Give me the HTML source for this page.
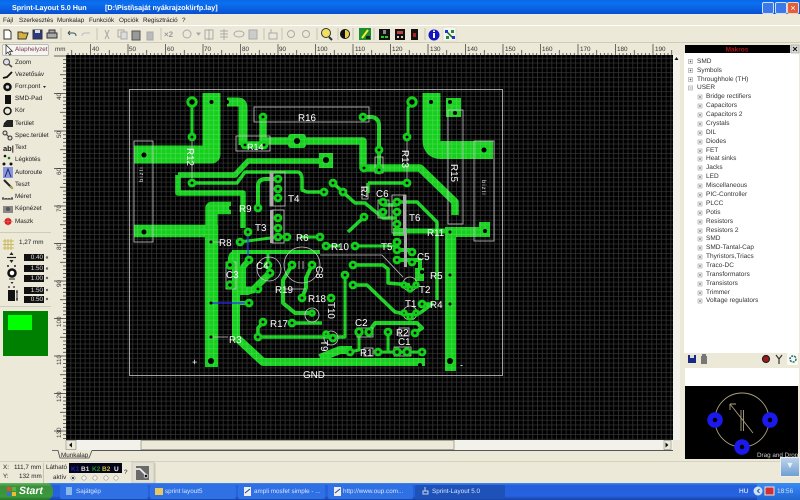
<!DOCTYPE html>
<html><head><meta charset="utf-8"><style>
html,body{margin:0;padding:0;width:800px;height:500px;overflow:hidden;background:#ece9d8;font-family:"Liberation Sans",sans-serif;color:#222;text-rendering:geometricPrecision}
body{filter:blur(.3px)}
.a{position:absolute;white-space:nowrap}
.m{top:17px;font-size:6.3px;line-height:8px}
.p{left:15px;font-size:6.3px;line-height:8px}
.t{left:697px;font-size:6.5px;line-height:8px;color:#333}
.t0{left:697px}.t1{left:706px}
.f{left:24px;width:20px;height:7px;background:#111;color:#ddd;font-size:6.3px;line-height:7px;text-align:right;padding-right:1px;box-sizing:border-box}
.tb{top:485px;height:14px;font-size:6.3px;line-height:14px;color:#d6e4fb;background:#2f70e4;border-radius:2px;box-sizing:border-box;padding-left:22px}
.s{font-size:6.3px;line-height:8px}
svg{position:absolute;left:0;top:0}
.ln{font:9.8px "Liberation Sans",sans-serif;fill:#fff}
</style></head><body>

<!-- title bar -->
<div class="a" style="left:0;top:0;width:800px;height:14px;background:linear-gradient(#0a68e8,#0a70f0 25%,#0a5fe0 65%,#0650d0)"></div>
<div class="a" style="left:12px;top:3px;font-size:7.2px;font-weight:bold;color:#fff;line-height:9px">Sprint-Layout 5.0 Hun</div>
<div class="a" style="left:105px;top:3px;font-size:7.2px;font-weight:bold;color:#fff;line-height:9px">[D:\Pisti\saját nyákrajzok\irfp.lay]</div>
<div class="a" style="left:762px;top:2px;width:10px;height:10px;background:#3c78e8;border:1px solid #cfe0fa;border-radius:2px"></div>
<div class="a" style="left:775px;top:2px;width:10px;height:10px;background:#3c78e8;border:1px solid #cfe0fa;border-radius:2px"></div>
<div class="a" style="left:787px;top:2px;width:10px;height:10px;background:#e0603c;border:1px solid #f5d0c0;border-radius:2px;color:#fff;font-size:9px;line-height:10px;text-align:center">×</div>

<!-- menu -->
<div class="a m" style="left:3px">Fájl</div>
<div class="a m" style="left:19px">Szerkesztés</div>
<div class="a m" style="left:57px">Munkalap</div>
<div class="a m" style="left:89px">Funkciók</div>
<div class="a m" style="left:119px">Opciók</div>
<div class="a m" style="left:143px">Regisztráció</div>
<div class="a m" style="left:182px">?</div>
<div class="a" style="left:0;top:25px;width:800px;height:1px;background:#fff"></div>
<div class="a" style="left:0;top:42px;width:800px;height:1px;background:#cfccb8"></div>

<!-- left palette text -->
<div class="a" style="left:2px;top:44px;width:47px;height:12px;background:#f6f5ee;border:1px solid #bbb;border-radius:2px;box-sizing:border-box"></div>
<div class="a p" style="top:46px;color:#7a3a5a">Alaphelyzet</div>
<div class="a p" style="top:59px">Zoom</div>
<div class="a p" style="top:71px">Vezetősáv</div>
<div class="a p" style="top:83px">Forr.pont</div>
<div class="a p" style="top:95px">SMD-Pad</div>
<div class="a p" style="top:107px">Kör</div>
<div class="a p" style="top:120px">Terület</div>
<div class="a p" style="top:132px">Spec.terület</div>
<div class="a p" style="top:144px">Text</div>
<div class="a p" style="top:156px">Légkötés</div>
<div class="a p" style="top:169px">Autoroute</div>
<div class="a p" style="top:181px">Teszt</div>
<div class="a p" style="top:193px">Méret</div>
<div class="a p" style="top:205px">Képnézet</div>
<div class="a p" style="top:218px">Maszk</div>
<div class="a s" style="left:19px;top:239px">1,27 mm</div>
<div class="a f" style="top:254px">0.40</div>
<div class="a f" style="top:265px">1.50</div>
<div class="a f" style="top:275px">1.00</div>
<div class="a f" style="top:287px">1.50</div>
<div class="a f" style="top:296px">0.50</div>
<div class="a" style="left:3px;top:311px;width:45px;height:45px;background:#008000"></div>
<div class="a" style="left:8px;top:315px;width:24px;height:15px;background:#0f0"></div>

<!-- main svg -->
<svg width="800" height="500" viewBox="0 0 800 500">
<defs>
<pattern id="g" patternUnits="userSpaceOnUse" x="66.5" y="54" width="4.7625" height="4.7625">
<path d="M4.3 0V4.7625M0 4.3H4.7625" stroke="#fff" stroke-opacity=".2" stroke-width=".8" fill="none"/>
</pattern>
<pattern id="rt" patternUnits="userSpaceOnUse" x="90" y="44" width="37.5" height="11">
<path d="M.5 0V11M19.25 6V11M4.25 9V11M8 9V11M11.75 9V11M15.5 9V11M23 9V11M26.75 9V11M30.5 9V11M34.25 9V11" stroke="#333" stroke-width=".7" fill="none"/>
</pattern>
<pattern id="rl" patternUnits="userSpaceOnUse" x="54" y="93" width="12" height="37.5">
<path d="M0 .5H12M6 19.25H12M9 4.25H12M9 8H12M9 11.75H12M9 15.5H12M9 23H12M9 26.75H12M9 30.5H12M9 34.25H12" stroke="#333" stroke-width=".7" fill="none"/>
</pattern>
</defs>

<!-- rulers -->
<rect x="66" y="44" width="607" height="11" fill="url(#rt)"/>
<rect x="54" y="55" width="12" height="385" fill="url(#rl)"/>
<g font-family="Liberation Sans,sans-serif" font-size="6.3" fill="#333">
<text x="55" y="51">mm</text>
<text x="92" y="51">40</text><text x="129" y="51">50</text><text x="167" y="51">60</text><text x="204" y="51">70</text><text x="242" y="51">80</text><text x="279" y="51">90</text><text x="317" y="51">100</text><text x="355" y="51">110</text><text x="392" y="51">120</text><text x="430" y="51">130</text><text x="467" y="51">140</text><text x="505" y="51">150</text><text x="542" y="51">160</text><text x="580" y="51">170</text><text x="617" y="51">180</text><text x="655" y="51">190</text>
<text transform="translate(61,100) rotate(-90)">40</text><text transform="translate(61,138) rotate(-90)">50</text><text transform="translate(61,175) rotate(-90)">60</text><text transform="translate(61,212) rotate(-90)">70</text><text transform="translate(61,250) rotate(-90)">80</text><text transform="translate(61,287) rotate(-90)">90</text><text transform="translate(61,327) rotate(-90)">100</text><text transform="translate(61,365) rotate(-90)">110</text><text transform="translate(61,402) rotate(-90)">120</text><text transform="translate(61,438) rotate(-90)">130</text>
</g>

<!-- board -->
<rect x="66" y="55" width="607" height="385" fill="#000"/>
<g fill="none" stroke="#14cf1c" stroke-linejoin="round" stroke-linecap="butt">
<!-- big pours -->
<path d="M134 154.5H211.5V93" stroke-width="18"/>
<path d="M431.5 93V140Q431.5 150 441 150H493" stroke-width="18"/>
<path d="M231 208H211.5V231H134" stroke-width="12.5"/>
<path d="M211.5 225V367" stroke-width="13"/>
<path d="M450.5 227V371" stroke-width="11"/>
<path d="M445 232H490" stroke-width="10"/>
<rect x="479" y="222" width="11" height="15" fill="#14cf1c" stroke="none"/>
<rect x="446" y="98" width="15" height="19" fill="#14cf1c" stroke="none"/>
<rect x="319" y="153" width="14" height="15" fill="#14cf1c" stroke="none"/>
<rect x="288" y="134" width="18" height="14" rx="3" fill="#14cf1c" stroke="none"/>
<rect x="393" y="228" width="14" height="8" fill="#14cf1c" stroke="none"/>
<!-- wide traces -->
<path d="M227 102H238Q243 102 243 108V145" stroke-width="9"/>
<path d="M263 117V145H245M264 141H363V168H420L455 202V215" stroke-width="7.5"/>
<path d="M178 175H235L248 161H326M178 175V193H243V228" stroke-width="5.5"/>
<path d="M192 183H237L245 172H297Q302 172 302 180V190L307 192H322" stroke-width="3.5"/>
<path d="M192 102V137M412 102L408 108V137" stroke-width="3"/>
<path d="M363 117H372Q379 118 379 126V170" stroke-width="4"/>
<path d="M258 208V186Q258 179 266 179H278" stroke-width="4"/>
<path d="M240 242L278 237H287M320 237H300" stroke-width="3"/>
<path d="M368 183H407M368 183V193" stroke-width="3.5"/>
<path d="M333 183L355 203H365L383 218H397M383 205H397M364 217L348 232" stroke-width="3.5"/>
<path d="M397 202H417L437 222V300" stroke-width="3.5"/>
<path d="M400 231H450" stroke-width="5"/>
<path d="M230 265V258Q231 252 238 252H320" stroke-width="4"/>
<path d="M236 250V337L263 362H425" stroke-width="8"/>
<path d="M232 290H253L270 273" stroke-width="7"/>
<path d="M249 260L243 267V290" stroke-width="6"/>
<path d="M236 293H248L258 289M236 303H249" stroke-width="4"/>
<path d="M268 265V253" stroke-width="3"/>
<path d="M292 265L283 280V303L295 313H310" stroke-width="4"/>
<path d="M312 265L306 278V288L302 298" stroke-width="4"/>
<path d="M263 322L258 328V337H345M292 323H322" stroke-width="3.5"/>
<path d="M326 246H340M355 246H397" stroke-width="3"/>
<path d="M397 260H420V272M400 250H412" stroke-width="4"/>
<rect x="415" y="268" width="9" height="13" fill="#14cf1c" stroke="none"/>
<path d="M353 265H383L388 269V283L410 285" stroke-width="3.5"/>
<path d="M353 285H367L395 312L410 315L420 313L432 304H422" stroke-width="3.5"/>
<path d="M345 275V337H333" stroke-width="3"/>
<path d="M369 332L375 323H417L422 328L415 333" stroke-width="4"/>
<path d="M359 332V350L350 352M378 352H422M388 332V352" stroke-width="3"/>
<path d="M320 358L340 350H352" stroke-width="8"/>
</g>
<!-- grid -->
<rect x="66" y="55" width="607" height="385" fill="url(#g)"/>
<!-- outline / silk -->
<g fill="none" stroke="#c8c8c8" stroke-width=".8">
<rect x="129.5" y="89.5" width="373" height="286"/>
<rect x="134" y="141" width="19" height="101"/>
<rect x="474" y="141" width="20" height="100"/>
<rect x="448" y="110" width="15" height="114"/>
<rect x="254" y="107" width="115" height="15"/>
<rect x="236" y="136" width="34" height="15"/>
<rect x="375" y="157" width="8" height="16"/>
<rect x="226" y="262" width="10" height="27"/>
<rect x="270" y="172" width="15" height="34"/>
<rect x="272" y="210" width="12" height="33"/>
<rect x="392" y="195" width="14" height="38"/>
<rect x="378" y="200" width="11" height="18"/>
<rect x="357" y="328" width="16" height="9"/>
<rect x="394" y="347" width="17" height="9"/>
<rect x="364" y="348" width="9" height="8"/>
<rect x="399" y="328" width="10" height="8"/>
<rect x="362" y="187" width="6" height="12"/>
<path d="M407 137V185M192 137V183M320 255H382L403 277M211 242H220M211 337H228M283 289H306"/>
<circle cx="269" cy="269" r="12"/>
<circle cx="302" cy="265" r="18"/>
<path d="M299 261V269M303 261V269"/>
<circle cx="410" cy="284" r="7"/>
<circle cx="410" cy="313" r="7"/>
<circle cx="331" cy="338" r="7"/>
<circle cx="312" cy="315" r="7"/>
</g>
<!-- silver bar -->
<rect x="270" y="172" width="3.5" height="34" fill="#aaa"/>
<rect x="270" y="210" width="3.5" height="33" fill="#aaa"/>
<rect x="404" y="233" width="3" height="34" fill="#aaa"/>
<rect x="403" y="195" width="3" height="38" fill="#aaa"/>
<path d="M248 230V260M211 303H248" stroke="#2a2aff" stroke-width="1.2" fill="none"/>
<!-- pads -->
<g fill="#000" stroke="#14cf1c" stroke-width="3">
<circle cx="192" cy="102" r="4.2"/><circle cx="192" cy="137" r="2.9"/><circle cx="192" cy="183" r="2.9"/>
<circle cx="412" cy="102" r="4.2"/><circle cx="407" cy="137" r="2.9"/><circle cx="407" cy="183" r="2.9"/>
<circle cx="263" cy="117" r="2.9"/><circle cx="363" cy="117" r="2.9"/>
<circle cx="245" cy="145" r="2.9"/><circle cx="264" cy="145" r="2.9"/>
<circle cx="379" cy="150" r="2.9"/><circle cx="379" cy="170" r="2.9"/><circle cx="364" cy="168" r="2.9"/>
<circle cx="278" cy="179" r="2.9"/><circle cx="278" cy="189" r="2.9"/><circle cx="278" cy="198" r="2.9"/><circle cx="258" cy="208" r="2.9"/>
<circle cx="248" cy="232" r="2.9"/><circle cx="278" cy="218" r="2.9"/><circle cx="278" cy="228" r="2.9"/><circle cx="278" cy="237" r="2.9"/>
<circle cx="240" cy="242" r="2.9"/><circle cx="287" cy="237" r="2.9"/><circle cx="320" cy="237" r="2.9"/>
<circle cx="333" cy="183" r="2.9"/><circle cx="343" cy="192" r="2.9"/><circle cx="324" cy="192" r="2.9"/><circle cx="364" cy="217" r="2.9"/>
<circle cx="383" cy="202" r="2.9"/><circle cx="383" cy="212" r="2.9"/><circle cx="397" cy="202" r="2.9"/><circle cx="397" cy="212" r="2.9"/><circle cx="397" cy="224" r="2.9"/>
<circle cx="326" cy="246" r="2.9"/><circle cx="355" cy="246" r="2.9"/><circle cx="397" cy="242" r="2.9"/><circle cx="397" cy="250" r="2.9"/><circle cx="397" cy="260" r="2.9"/>
<circle cx="412" cy="252" r="2.9"/><circle cx="412" cy="262" r="2.9"/><circle cx="353" cy="265" r="2.9"/><circle cx="353" cy="285" r="2.9"/><circle cx="345" cy="275" r="2.9"/>
<circle cx="404" cy="285" r="2.3"/><circle cx="410" cy="289" r="2.3"/><circle cx="416" cy="285" r="2.3"/>
<circle cx="404" cy="313" r="2.3"/><circle cx="410" cy="317" r="2.3"/><circle cx="416" cy="313" r="2.3"/><circle cx="422" cy="304" r="2.9"/>
<circle cx="359" cy="332" r="3.2"/><circle cx="369" cy="332" r="3.2"/><circle cx="388" cy="332" r="2.9"/><circle cx="415" cy="333" r="2.9"/>
<circle cx="350" cy="352" r="2.9"/><circle cx="378" cy="352" r="2.9"/><circle cx="397" cy="352" r="3.2"/><circle cx="407" cy="352" r="3.2"/><circle cx="422" cy="352" r="2.9"/>
<circle cx="333" cy="338" r="2.9"/><circle cx="326" cy="334" r="2.3"/><circle cx="331" cy="298" r="2.9"/>
<circle cx="230" cy="265" r="3.2"/><circle cx="230" cy="285" r="3.2"/><circle cx="249" cy="260" r="2.9"/><circle cx="268" cy="265" r="2.9"/><circle cx="270" cy="273" r="2.9"/>
<circle cx="292" cy="265" r="2.9"/><circle cx="312" cy="265" r="2.9"/><circle cx="258" cy="289" r="2.9"/><circle cx="302" cy="298" r="2.9"/><circle cx="249" cy="303" r="2.9"/>
<circle cx="263" cy="322" r="2.9"/><circle cx="258" cy="337" r="2.9"/><circle cx="292" cy="323" r="2.9"/><circle cx="312" cy="313" r="2.3"/>
</g>
<!-- holes in pours -->
<g fill="#000">
<circle cx="211.5" cy="102" r="2"/><circle cx="144" cy="155" r="2.5"/><circle cx="227" cy="102" r="2"/><circle cx="297" cy="141" r="3"/>
<circle cx="326" cy="160" r="3"/><circle cx="431" cy="102" r="2"/><circle cx="450" cy="102" r="2"/><circle cx="455" cy="113" r="2"/><circle cx="484" cy="150" r="2.5"/>
<circle cx="231" cy="208" r="2"/><circle cx="144" cy="232" r="2.5"/><circle cx="211" cy="242" r="1.5"/><circle cx="211" cy="303" r="1.5"/><circle cx="211" cy="337" r="1.5"/><circle cx="211" cy="361" r="3"/>
<circle cx="450" cy="361" r="3"/><circle cx="450" cy="232" r="1.5"/><circle cx="450" cy="275" r="1.5"/><circle cx="450" cy="304" r="1.5"/><circle cx="485" cy="231" r="2"/>
<circle cx="420" cy="365" r="2"/><circle cx="422" cy="272" r="2"/>
</g>
<!-- labels -->
<g>
<text class="ln" x="298" y="121">R16</text>
<text class="ln" x="247" y="150" style="font-size:9px">R14</text>
<text class="ln" transform="translate(187,148) rotate(90)">R12</text>
<text class="ln" transform="translate(402,150) rotate(90)">R13</text>
<text class="ln" transform="translate(451,164) rotate(90)">R15</text>
<text class="ln" transform="translate(361,186) rotate(90)" style="font-size:9px">R7</text>
<text class="ln" x="239" y="212">R9</text>
<text class="ln" x="219" y="246">R8</text>
<text class="ln" x="296" y="241">R6</text>
<text class="ln" x="331" y="250">R10</text>
<text class="ln" x="427" y="236">R11</text>
<text class="ln" x="430" y="279">R5</text>
<text class="ln" x="430" y="308">R4</text>
<text class="ln" x="275" y="293">R19</text>
<text class="ln" x="308" y="302">R18</text>
<text class="ln" x="270" y="327">R17</text>
<text class="ln" x="229" y="343">R3</text>
<text class="ln" x="396" y="336">R2</text>
<text class="ln" x="360" y="356">R1</text>
<text class="ln" x="376" y="197">C6</text>
<text class="ln" x="417" y="260">C5</text>
<text class="ln" x="256" y="269">C4</text>
<text class="ln" x="226" y="278">C3</text>
<text class="ln" x="355" y="326">C2</text>
<text class="ln" x="398" y="345">C1</text>
<text class="ln" transform="translate(316,266) rotate(90)">C8</text>
<text class="ln" x="288" y="202">T4</text>
<text class="ln" x="255" y="231">T3</text>
<text class="ln" x="409" y="221">T6</text>
<text class="ln" x="381" y="250">T5</text>
<text class="ln" x="419" y="293">T2</text>
<text class="ln" x="405" y="307">T1</text>
<text class="ln" transform="translate(328,302) rotate(90)">T10</text>
<text class="ln" transform="translate(321,340) rotate(90)">T9</text>
<text class="ln" x="303" y="378">GND</text>
<text x="192" y="365" fill="#fff" font-size="9" font-family="Liberation Sans,sans-serif">+</text>
<text x="460" y="368" fill="#fff" font-size="9" font-family="Liberation Sans,sans-serif">-</text>
<text transform="translate(143,182) rotate(-90)" font-size="6" fill="#ddd" font-family="Liberation Sans,sans-serif" letter-spacing="1">bizti</text>
<text transform="translate(482,180) rotate(90)" font-size="6" fill="#ddd" font-family="Liberation Sans,sans-serif" letter-spacing="1">bizti</text>
</g>

<!-- v scrollbar -->
<rect x="673" y="55" width="7" height="385" fill="#f3f2ea"/>
<path d="M676.5 57l-2 3h4z" fill="#111"/>
<!-- h scrollbar -->
<rect x="66" y="440" width="607" height="10" fill="#f3f2ea"/>
<rect x="141" y="440.5" width="313" height="9" fill="#ece9d8" stroke="#8a887a" stroke-width=".7"/>
<rect x="66" y="440.5" width="10" height="9" fill="#ece9d8" stroke="#888" stroke-width=".6"/>
<rect x="664" y="440.5" width="7" height="9" fill="#ece9d8" stroke="#888" stroke-width=".6"/>
<path d="M69 445l3-2.5v5zM668.5 445l-3-2.5v5z" fill="#111"/>
<!-- tab -->
<path d="M92 450.500H673" stroke="#555" stroke-width="1"/>
<path d="M52 450.500H58L60 458H89L92 450.500" fill="#ece9d8" stroke="#444" stroke-width=".8"/>
<text x="61" y="457" font-size="6.3" fill="#222" font-family="Liberation Sans,sans-serif">Munkalap</text>

<!-- toolbar icons -->
<g stroke="#333" stroke-width="1" fill="none">
<path d="M4 30h5l2 2v7H4z" fill="#fff"/>
<path d="M18 32h4l1 1h5l-2 6H18z" fill="#d8b040"/>
<rect x="33" y="30" width="9" height="9" fill="#2a3a80"/><rect x="35" y="30" width="5" height="3" fill="#ddd" stroke="none"/>
<path d="M47 33h10v5H47zM49 30h6v3h-6z" fill="#aaa"/>
<path d="M68 33h5q3 0 3 3M68 33l2-2M68 33l2 2" stroke="#355"/>
<path d="M90 33h-5q-3 0-3 3" stroke="#bbb"/>
<g stroke="#aaa">
<path d="M105 30l4 9M109 30l-4 9"/>
<rect x="118" y="30" width="6" height="7"/><rect x="121" y="32" width="6" height="7" fill="#ddd"/>
<rect x="132" y="31" width="8" height="9" fill="#999" stroke="#555"/>
<rect x="147" y="32" width="6" height="8" fill="#bbb"/>
<circle cx="187" cy="34" r="4"/>
<path d="M197 33h3l-1.500 2z" fill="#888"/>
<rect x="205" y="30" width="8" height="9"/><path d="M209 29v11"/>
<path d="M220 31h8M220 34h8M220 37h8M224 29v11"/>
<ellipse cx="239" cy="34" rx="5" ry="3"/>
<rect x="249" y="30" width="8" height="9" fill="#ccc"/>
<path d="M269 33h8v6h-8zM271 29v4"/>
<circle cx="291" cy="34" r="3.5"/><circle cx="306" cy="34" r="3.5"/>
</g>
<path d="M61 28v12M97 28v12M161 28v12M264 28v12M282 28v12M317 28v12M338 28v12M353 28v12M374 28v12M425 28v12" stroke="#c5c2b0"/>
</g>
<text x="164" y="37" font-size="8" font-weight="bold" fill="#999" font-family="Liberation Sans,sans-serif">×2</text>
<circle cx="326" cy="33" r="4.5" fill="#f0e060" stroke="#333"/><path d="M329 37l3 3" stroke="#333" stroke-width="2"/>
<circle cx="345" cy="34" r="4.500" fill="#fff" stroke="#111"/><path d="M345 29.500a4.500 4.500 0 0 0 0 9z" fill="#111"/><path d="M345 30a4 4 0 0 1 0 8z" fill="#e8d040"/>
<rect x="359" y="28" width="12" height="12" fill="#1c8c2c"/><path d="M362 38l6-8" stroke="#ee3" stroke-width="2"/><rect x="366" y="36" width="4" height="3" fill="#222"/>
<rect x="379" y="29" width="11" height="11" fill="#111"/><rect x="381" y="36" width="3" height="2" fill="#2c2"/><rect x="385" y="36" width="3" height="2" fill="#2c2"/><rect x="383" y="30" width="3" height="4" fill="#888"/>
<rect x="395" y="29" width="10" height="11" fill="#111"/><rect x="397" y="31" width="6" height="3" fill="#b44"/><rect x="397" y="36" width="2" height="2" fill="#dcb"/><rect x="401" y="36" width="2" height="2" fill="#dcb"/>
<rect x="411" y="29" width="7" height="11" fill="#111"/><rect x="413" y="33" width="3" height="4" fill="#a22"/>
<circle cx="434" cy="35" r="5.500" fill="#1414c0"/><rect x="433" y="33" width="2" height="5" fill="#fff"/><rect x="433" y="30.500" width="2" height="1.500" fill="#fff"/>
<rect x="443" y="27" width="13" height="14" fill="#f6f5ee" stroke="#d5d3c4" stroke-width=".6"/>
<path d="M446 31l7 7" stroke="#186818" stroke-width="1.500"/><rect x="445" y="30" width="3" height="3" fill="#1a3ad0"/><rect x="452" y="36" width="3" height="3" fill="#1a3ad0"/><rect x="451" y="30" width="3" height="3" fill="#1a8a3a"/><rect x="446" y="36" width="3" height="3" fill="#1a8a3a"/>

<!-- palette icons -->
<path d="M6 45v9l2-2 1.500 3 1.500-.7-1.500-3h3z" fill="#fff" stroke="#333" stroke-width=".8"/>
<circle cx="6.500" cy="62" r="3" fill="#dde" stroke="#444"/><path d="M9 64.500l3 2.500" stroke="#444" stroke-width="1.500"/>
<path d="M3 78l4-1 5-5" stroke="#111" stroke-width="1.800" fill="none"/>
<circle cx="7.500" cy="87" r="3" fill="#ddd" stroke="#111" stroke-width="2.500"/>
<rect x="5" y="95" width="6" height="9" fill="#111"/>
<circle cx="7.500" cy="111" r="3.500" fill="none" stroke="#111" stroke-width="1.500"/>
<path d="M3 127l1-4 3-3h6v7z" fill="#222"/>
<circle cx="5" cy="133" r="2" fill="#ddd" stroke="#333"/><circle cx="10" cy="138" r="2" fill="#ddd" stroke="#333"/><path d="M6 134l3 3" stroke="#333"/>
<text x="3" y="151" font-size="7.500" font-weight="bold" fill="#111" font-family="Liberation Sans,sans-serif">ab|</text>
<circle cx="5" cy="156" r="1.300" fill="#111"/><circle cx="9" cy="158" r="1.300" fill="#1a7a1a"/><circle cx="4" cy="164" r="1.500" fill="#111"/><circle cx="11" cy="164" r="1.500" fill="#111"/>
<rect x="3" y="167" width="10" height="11" fill="#8898dc"/><path d="M5 177l3-8 3 8" stroke="#226" fill="none"/>
<path d="M4 180l8 8" stroke="#222" stroke-width="2"/><path d="M10 186l3 3" stroke="#ba3" stroke-width="1.500"/>
<path d="M2 199h11M3 197v2M6 198v1M9 198v1M12 197v2" stroke="#222" fill="none"/>
<rect x="3" y="206" width="10" height="7" fill="#888"/><circle cx="8" cy="209" r="2" fill="#555"/>
<circle cx="8" cy="221.500" r="3.500" fill="#e01818"/><path d="M3 221.500h10M8 217v9" stroke="#b88" stroke-width=".6"/>
<path d="M0 232.500H51" stroke="#cfccb8"/>
<g stroke="#c8b858" stroke-width="1" fill="none"><path d="M5 239v11M8 239v11M11 239v11M3 241h11M3 244.500h11M3 248h11"/></g>
<path d="M7 257.500h9" stroke="#222" stroke-width="1.200"/><path d="M11.500 252l-2 3h4zM11.500 263l-2-3h4z" fill="#222"/>
<circle cx="12" cy="273" r="3.500" fill="#fff" stroke="#111" stroke-width="2.500"/><circle cx="8" cy="266" r="1" fill="#222"/><circle cx="15" cy="266" r="1" fill="#222"/><path d="M9 279h6" stroke="#222"/><path d="M10.500 282h3l-1.500 2z" fill="#222"/>
<rect x="8" y="290" width="7" height="11" fill="#111"/><circle cx="9" cy="287" r=".9" fill="#222"/><circle cx="14" cy="287" r=".9" fill="#222"/><path d="M17 290v11M16 292h2M16 299h2" stroke="#222" fill="none"/>
<g fill="#666"><circle cx="47" cy="257.500" r="1.200"/><circle cx="47" cy="268.500" r="1.200"/><circle cx="47" cy="278" r="1.200"/><circle cx="47" cy="290" r="1.200"/><circle cx="47" cy="299" r="1.200"/></g>
<path d="M0 306.500H51" stroke="#cfccb8"/>
<path d="M43 86l3 0-1.500 2z" fill="#222"/>

<!-- right panel -->
<rect x="684" y="53" width="115" height="300" fill="#fff"/>
<rect x="685" y="45" width="105" height="8" fill="#000"/>
<text x="737" y="51.500" text-anchor="middle" font-size="6.500" font-weight="bold" fill="#b01414" font-family="Liberation Sans,sans-serif">Makros</text>
<rect x="791" y="45" width="8" height="8" fill="#ddd" stroke="#888" stroke-width=".5"/>
<path d="M793 47l4 4M797 47l-4 4" stroke="#111" stroke-width="1"/>
<rect x="685" y="368" width="114" height="18" fill="#fff"/>
<rect x="685" y="386" width="113" height="73" fill="#000"/>
<g fill="none" stroke="#aaa080" stroke-width=".9">
<circle cx="742" cy="420" r="27"/>
<path d="M730 404L753 433M730 404v6M730 404h6M741 410v21M743.500 410v21"/>
</g>
<g fill="#000" stroke="#1a1aee" stroke-width="5.500">
<circle cx="715" cy="420" r="5"/><circle cx="770" cy="420" r="5"/><circle cx="742" cy="447" r="5"/>
</g>
<text x="757" y="457" font-size="6.300" fill="#ccc" font-family="Liberation Sans,sans-serif">Drag and Drop</text>
<rect x="688" y="355" width="8" height="8" fill="#1a2a80"/><rect x="690" y="355" width="4" height="3" fill="#ddd"/>
<rect x="701" y="356" width="6" height="8" fill="#777"/><rect x="702" y="354" width="4" height="2" fill="#777"/>
<circle cx="766" cy="359" r="3.500" fill="#a01818" stroke="#222" stroke-width="1.200"/>
<path d="M776 355l3 4v5M782 355l-3 4" stroke="#333" stroke-width="1.200" fill="none"/>
<rect x="787" y="353" width="11" height="12" fill="#fafaf2"/><circle cx="793" cy="359" r="3" fill="none" stroke="#1a6a6a" stroke-width="1.500" stroke-dasharray="2 1"/>
<!-- tree boxes -->
<g fill="#fff" stroke="#999" stroke-width=".6">
<rect x="688.500" y="59.500" width="4" height="4"/><rect x="688.500" y="68.500" width="4" height="4"/><rect x="688.500" y="77.500" width="4" height="4"/><rect x="688.500" y="86" width="4" height="4"/>
</g>
<path d="M689.500 61.500h2M690.500 60.500v2M689.500 70.500h2M690.500 69.500v2M689.500 79.500h2M690.500 78.500v2M689.500 88h2" stroke="#333" stroke-width=".6"/>
<g fill="#fff" stroke="#888" stroke-width=".5">
<rect x="698" y="95" width="4" height="4"/><rect x="698" y="104" width="4" height="4"/><rect x="698" y="113" width="4" height="4"/><rect x="698" y="122" width="4" height="4"/><rect x="698" y="131" width="4" height="4"/><rect x="698" y="140" width="4" height="4"/><rect x="698" y="149" width="4" height="4"/><rect x="698" y="157" width="4" height="4"/><rect x="698" y="166" width="4" height="4"/><rect x="698" y="175" width="4" height="4"/><rect x="698" y="184" width="4" height="4"/><rect x="698" y="193" width="4" height="4"/><rect x="698" y="202" width="4" height="4"/><rect x="698" y="211" width="4" height="4"/><rect x="698" y="220" width="4" height="4"/><rect x="698" y="229" width="4" height="4"/><rect x="698" y="237" width="4" height="4"/><rect x="698" y="246" width="4" height="4"/><rect x="698" y="255" width="4" height="4"/><rect x="698" y="264" width="4" height="4"/><rect x="698" y="273" width="4" height="4"/><rect x="698" y="282" width="4" height="4"/><rect x="698" y="291" width="4" height="4"/><rect x="698" y="299" width="4" height="4"/>
</g>
<path d="M699 97h2M700 96v2M699 106h2M700 105v2M699 115h2M700 114v2M699 124h2M700 123v2M699 133h2M700 132v2M699 142h2M700 141v2M699 151h2M700 150v2M699 159h2M700 158v2M699 168h2M700 167v2M699 177h2M700 176v2M699 186h2M700 185v2M699 195h2M700 194v2M699 204h2M700 203v2M699 213h2M700 212v2M699 222h2M700 221v2M699 231h2M700 230v2M699 239h2M700 238v2M699 248h2M700 247v2M699 257h2M700 256v2M699 266h2M700 265v2M699 275h2M700 274v2M699 284h2M700 283v2M699 293h2M700 292v2M699 301h2M700 300v2" stroke="#333" stroke-width=".5"/>

<!-- status -->
<path d="M0 461.500H780" stroke="#d5d2c0"/>
<path d="M155 463V483M43.500 463V483" stroke="#c8c5b2"/>
<rect x="69" y="463" width="53" height="10" fill="#050518"/>
<g font-family="Liberation Sans,sans-serif" font-size="6.500" font-weight="bold">
<text x="71" y="471" fill="#2020c0">K1</text><text x="81" y="471" fill="#ddd">B1</text><text x="92" y="471" fill="#1a9a2a">K2</text><text x="102" y="471" fill="#c8c040">B2</text><text x="114" y="471" fill="#eee">U</text>
</g>
<g fill="#f6f5ee" stroke="#999" stroke-width=".7"><circle cx="73" cy="478" r="2.200"/><circle cx="84" cy="478" r="2.200"/><circle cx="95" cy="478" r="2.200"/><circle cx="106" cy="478" r="2.200"/><circle cx="116" cy="478" r="2.200"/></g>
<circle cx="73" cy="478" r="1" fill="#111"/>
<rect x="132" y="462" width="22" height="21" fill="#e4e1d2" stroke="#bbb" stroke-width=".6"/>
<rect x="136" y="466" width="13" height="14" fill="#6a6a6a"/>
<path d="M136 469h4l6 6" stroke="#eee" stroke-width="1.800" fill="none"/><circle cx="146" cy="476" r="1.800" fill="#111" stroke="#eee" stroke-width=".8"/>
</svg>

<!-- tree text -->
<div class="a t t0" style="top:58px">SMD</div>
<div class="a t t0" style="top:67px">Symbols</div>
<div class="a t t0" style="top:76px">Throughhole (TH)</div>
<div class="a t t0" style="top:84px">USER</div>
<div class="a t t1" style="top:93px">Bridge rectifiers</div>
<div class="a t t1" style="top:102px">Capacitors</div>
<div class="a t t1" style="top:111px">Capacitors 2</div>
<div class="a t t1" style="top:120px">Crystals</div>
<div class="a t t1" style="top:129px">DIL</div>
<div class="a t t1" style="top:138px">Diodes</div>
<div class="a t t1" style="top:147px">FET</div>
<div class="a t t1" style="top:155px">Heat sinks</div>
<div class="a t t1" style="top:164px">Jacks</div>
<div class="a t t1" style="top:173px">LED</div>
<div class="a t t1" style="top:182px">Miscellaneous</div>
<div class="a t t1" style="top:191px">PIC-Controller</div>
<div class="a t t1" style="top:200px">PLCC</div>
<div class="a t t1" style="top:209px">Potis</div>
<div class="a t t1" style="top:218px">Resistors</div>
<div class="a t t1" style="top:227px">Resistors 2</div>
<div class="a t t1" style="top:235px">SMD</div>
<div class="a t t1" style="top:244px">SMD-Tantal-Cap</div>
<div class="a t t1" style="top:253px">Thyristors,Triacs</div>
<div class="a t t1" style="top:262px">Traco-DC</div>
<div class="a t t1" style="top:271px">Transformators</div>
<div class="a t t1" style="top:280px">Transistors</div>
<div class="a t t1" style="top:289px">Trimmer</div>
<div class="a t t1" style="top:297px">Voltage regulators</div>

<!-- status text -->
<div class="a s" style="left:3px;top:464px">X:</div>
<div class="a s" style="left:14px;top:464px">111,7 mm</div>
<div class="a s" style="left:3px;top:473px">Y:</div>
<div class="a s" style="left:19px;top:473px">132 mm</div>
<div class="a s" style="left:46px;top:464px">Látható</div>
<div class="a s" style="left:53px;top:474px">aktív</div>
<div class="a s" style="left:124px;top:469px">?</div>

<!-- corner widget -->
<div class="a" style="left:780px;top:457px;width:20px;height:20px;background:linear-gradient(#bcd4ea,#6f9fd2);border:1px solid #eee;box-sizing:border-box;color:#e8f0fa;font-size:9px;line-height:15px;text-align:center">▼</div>

<!-- taskbar -->
<div class="a" style="left:0;top:483px;width:800px;height:17px;background:linear-gradient(#3f8cf3,#245edb 15%,#2663e0 75%,#1941a5)"></div>
<div class="a" style="left:0;top:483px;width:53px;height:17px;background:linear-gradient(#5fb85f,#3c8f3c 20%,#3a9a3a 80%,#2c702c);border-radius:0 7px 7px 0;color:#fff;font-size:10.5px;font-weight:bold;font-style:italic;line-height:17px;box-sizing:border-box;padding-left:19px">Start</div>
<svg width="800" height="500" style="pointer-events:none">
<g><rect x="7" y="487" width="4" height="4" fill="#e0502a"/><rect x="12" y="487" width="4" height="4" fill="#60b040"/><rect x="7" y="492" width="4" height="4" fill="#3a70d0"/><rect x="12" y="492" width="4" height="4" fill="#e8c030"/></g>
</svg>
<div class="a tb" style="left:60px;width:88px;padding-left:16px">Sajátgép</div>
<div class="a tb" style="left:150px;width:86px;padding-left:15px">sprint layout5</div>
<div class="a tb" style="left:238px;width:87px;padding-left:16px">ampli mosfet simple - ...</div>
<div class="a tb" style="left:328px;width:85px;padding-left:15px">http://www.oup.com...</div>
<div class="a tb" style="left:415px;width:90px;padding-left:17px;background:#1e52b8">Sprint-Layout 5.0</div>
<svg width="800" height="500" style="pointer-events:none">
<rect x="66" y="487" width="6" height="8" fill="#8ab8e8"/>
<path d="M155 488h8v7h-8z" fill="#e8c860"/>
<rect x="244" y="487" width="7" height="9" fill="#eee"/><path d="M245 493l5-4" stroke="#2040a0"/>
<rect x="334" y="487" width="7" height="9" fill="#eee"/><path d="M335 493l5-4" stroke="#2040a0"/>
<path d="M425 487v4M423 491h5v3h-5z" stroke="#c8d0e0" fill="none"/>
</svg>
<div class="a" style="left:757px;top:483px;width:43px;height:17px;background:linear-gradient(#3a8cf0,#2a78e8 50%,#2066d0)"></div>
<div class="a" style="left:739px;top:487px;font-size:6.5px;line-height:9px;color:#fff">HU</div>
<div class="a" style="left:777px;top:487px;font-size:6.5px;line-height:9px;color:#dde">18:56</div>
<svg width="800" height="500" style="pointer-events:none">
<circle cx="758" cy="491" r="4.500" fill="#cfe0f5"/><path d="M759.500 489l-2 2 2 2" stroke="#20509a" fill="none"/>
<rect x="765" y="487" width="9" height="8" fill="#d03030" stroke="#f0e0e0"/>
</svg>
</body></html>
